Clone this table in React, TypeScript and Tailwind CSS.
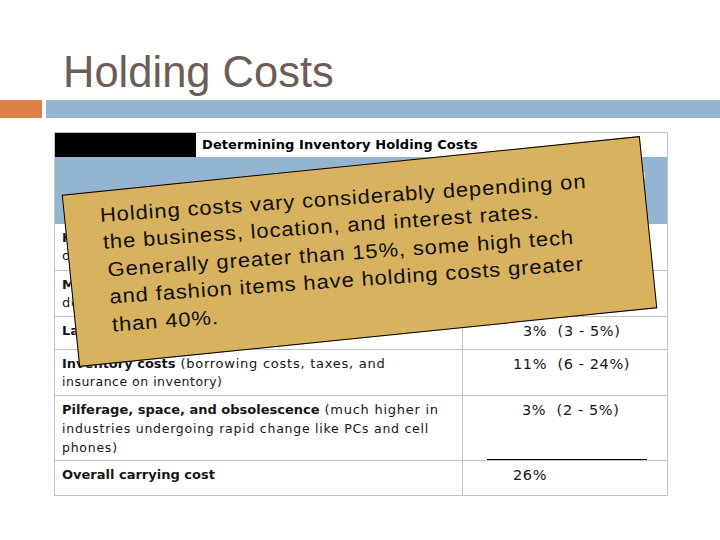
import React from 'react'

const rows = [
  {
    h: 'h-[46px]',
    left: (
      <>
        <b className="tracking-normal">Housing costs</b> (building rent or depreciation,
        <br />
        operating costs, taxes, insurance)
      </>
    ),
    right: '6%  (3 - 10%)',
    pl: 'pl-[52px]',
    top: false,
  },
  {
    h: 'h-[46px]',
    left: (
      <>
        <b className="tracking-normal">Material handling costs</b> (equipment lease or
        <br />
        depreciation, power, operating cost)
      </>
    ),
    right: '3%  (1 - 3.5%)',
    pl: 'pl-[56px]',
    top: true,
  },
  {
    h: 'h-[33px]',
    left: <b className="tracking-normal">Labor cost from extra handling</b>,
    right: '3%  (3 - 5%)',
    pl: 'pl-[60px]',
    top: true,
  },
  {
    h: 'h-[46px]',
    left: (
      <>
        <b className="tracking-normal">Inventory costs</b> (borrowing costs, taxes, and
        <br />
        <span className="text-[12.5px] tracking-[0.5px]">insurance on inventory)</span>
      </>
    ),
    right: '11%  (6 - 24%)',
    pl: 'pl-[50px]',
    top: true,
  },
]

export default function App() {
  return (
    <div
      className="relative w-[720px] h-[540px] overflow-hidden bg-white"
      style={{ fontFamily: '"Liberation Sans", Arial, sans-serif' }}
    >
      {/* Title */}
      <div className="pt-[51px] pl-[63px] text-[43.5px] leading-[43px] text-[#6d5d56]">
        Holding Costs
      </div>

      {/* Accent bar */}
      <div className="mt-[6px] flex h-[18px] gap-[4px]">
        <div className="w-[42px] bg-[#dd8047]" />
        <div className="flex-1 bg-[#94b5d1]" />
      </div>

      {/* Table */}
      <div
        className="ml-[54px] mt-[14px] w-[614px] border-x border-b border-[#c4c4c4] text-[#161616]"
        style={{ fontFamily: '"DejaVu Sans", Verdana, sans-serif' }}
      >
        <div className="flex h-[25px] border-t border-[#c4c4c4]">
          <div className="w-[141px] bg-black" />
          <div className="pl-[6px] pt-[4px] text-[13px] font-bold leading-[16px] tracking-[0.1px] text-black">
            Determining Inventory Holding Costs
          </div>
        </div>

        <div className="flex h-[67px] bg-[#94b5d1] text-[13px] font-bold leading-[17px] text-white">
          <div className="w-[408px]" />
          <div className="flex-1 px-[6px] pt-[8px] text-center">
            Cost (and Range) as a Percent of Inventory Value
          </div>
        </div>

        {rows.map((r, i) => (
          <div
            key={i}
            className={`flex ${r.h} ${r.top ? 'border-t' : ''} border-[#c4c4c4]`}
          >
            <div className="w-[408px] border-r border-[#c4c4c4] pl-[7px] pt-[5px] text-[13px] leading-[18px] tracking-[0.75px]">
              {r.left}
            </div>
            <div className={`flex-1 ${r.pl} pt-[5px] text-[14.5px] leading-[18px] tracking-[0.6px] whitespace-pre`}>
              {r.right}
            </div>
          </div>
        ))}

        <div className="flex h-[65px] border-t border-[#c4c4c4]">
          <div className="w-[408px] border-r border-[#c4c4c4] pl-[7px] pt-[4px] text-[13px] leading-[19px] tracking-[0.75px]">
            <b className="tracking-normal">Pilferage, space, and obsolescence</b> (much higher in
            <br />
            <span className="text-[12.5px]">industries undergoing rapid change like PCs and cell</span>
            <br />
            <span className="text-[12.5px]">phones)</span>
          </div>
          <div className="flex flex-1 flex-col pt-[5px]">
            <div className="pl-[59px] text-[14.5px] leading-[18px] tracking-[0.6px] whitespace-pre">
              3%  (2 - 5%)
            </div>
            <div className="mt-auto ml-[24px] h-px w-[160px] bg-black" />
          </div>
        </div>

        <div className="flex h-[35px] border-t border-[#c4c4c4]">
          <div className="w-[408px] border-r border-[#c4c4c4] pl-[7px] pt-[5px] text-[13px] font-bold leading-[18px]">
            Overall carrying cost
          </div>
          <div className="flex-1 pl-[50px] pt-[5px] text-[14.5px] leading-[18px] tracking-[0.6px]">
            26%
          </div>
        </div>
      </div>

      {/* Sticky note overlay */}
      <div className="absolute left-[69px] top-[165px] h-[173px] w-[581px] -rotate-[5.8deg] border border-black bg-[#d8b25f]" />
      <div className="absolute left-[99px] top-[201.5px] origin-top-left -rotate-[4deg] scale-x-[1.1] whitespace-nowrap text-[20px] leading-[27.4px] tracking-[0.8px] text-[#111]">
        <div>Holding costs vary considerably depending on</div>
        <div className="pl-[1px]">the business, location, and interest rates.</div>
        <div className="pl-[3.5px]">Generally greater than 15%, some high tech</div>
        <div className="pl-[3.5px]">and fashion items have holding costs greater</div>
        <div className="pl-[4px]">than 40%.</div>
      </div>
    </div>
  )
}
